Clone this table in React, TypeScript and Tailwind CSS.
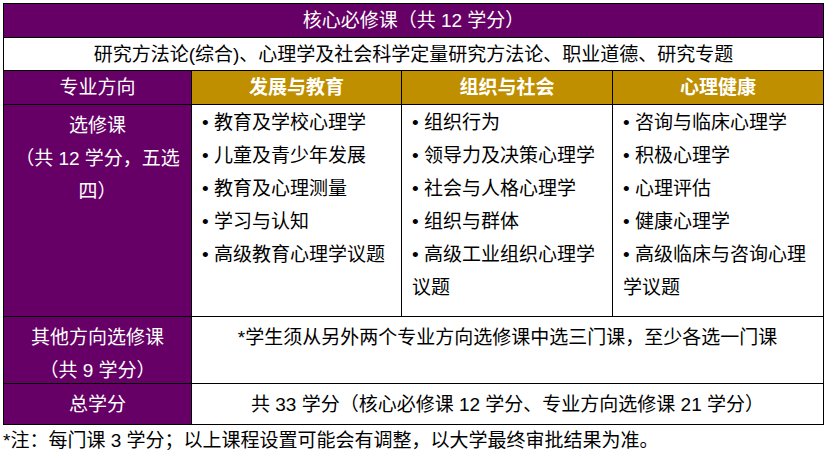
const electives = [
  ['教育及学校心理学', '儿童及青少年发展', '教育及心理测量', '学习与认知', '高级教育心理学议题'],
  ['组织行为', '领导力及决策心理学', '社会与人格心理学', '组织与群体', '高级工业组织心理学议题'],
  ['咨询与临床心理学', '积极心理学', '心理评估', '健康心理学', '高级临床与咨询心理学议题'],
]

const tracks = ['发展与教育', '组织与社会', '心理健康']

export default function App() {
  return (
    <div
      className="w-[835px] h-[458px] bg-white text-black text-[19px] leading-[33px] pl-[3px] pt-[3px]"
      style={{ fontFamily: '"Liberation Sans", "Noto Sans CJK SC", sans-serif' }}
    >
      <div className="w-[821px] grid grid-cols-[187px_209px_210px_210px] grid-rows-[33px_32px_33px_211px_66px_40px] gap-px bg-black border border-black">
        {/* core */}
        <div className="col-span-4 bg-[#660066] text-white flex items-center justify-center">
          核心必修课（共 12 学分）
        </div>
        <div className="col-span-4 bg-white flex items-center justify-center">
          研究方法论(综合)、心理学及社会科学定量研究方法论、职业道德、研究专题
        </div>

        {/* track headers */}
        <div className="bg-[#660066] text-white flex items-center justify-center">专业方向</div>
        {tracks.map((t) => (
          <div key={t} className="bg-[#bf8f00] text-white font-bold flex items-center justify-center">
            {t}
          </div>
        ))}

        {/* electives */}
        <div className="bg-[#660066] text-white text-center px-[7px] pt-[4px]">
          选修课
          <br />
          （共 12 学分，五选四）
        </div>
        {electives.map((list, i) => (
          <div key={i} className="bg-white pl-[10px] pr-[6px] pt-[1px]">
            {list.map((item) => (
              <div key={item}>• {item}</div>
            ))}
          </div>
        ))}

        {/* other tracks */}
        <div className="bg-[#660066] text-white text-center pt-[4px]">
          其他方向选修课
          <br />
          （共 9 学分）
        </div>
        <div className="col-span-3 bg-white text-center pt-[4px]">
          *学生须从另外两个专业方向选修课中选三门课，至少各选一门课
        </div>

        {/* total */}
        <div className="bg-[#660066] text-white flex items-center justify-center">总学分</div>
        <div className="col-span-3 bg-white flex items-center justify-center">
          共 33 学分（核心必修课 12 学分、专业方向选修课 21 学分）
        </div>
      </div>
      <p className="leading-[31px]">*注：每门课 3 学分；以上课程设置可能会有调整，以大学最终审批结果为准。</p>
    </div>
  )
}
